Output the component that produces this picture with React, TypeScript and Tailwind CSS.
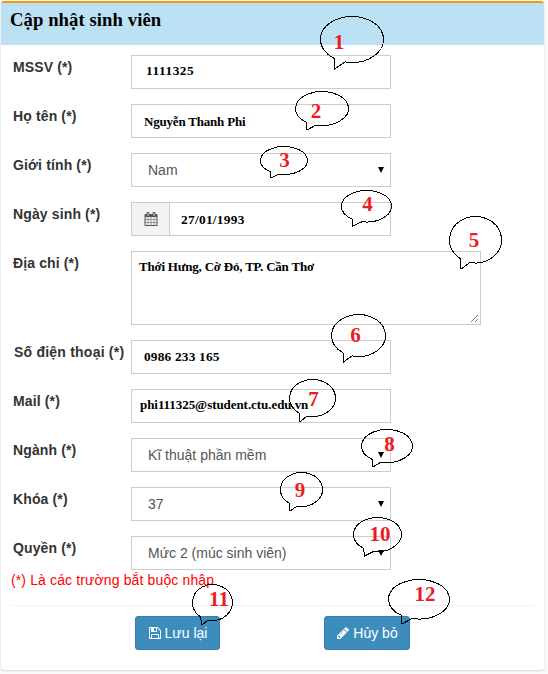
import type { ReactNode } from "react";

const sans = "font-['Liberation_Sans',Arial,sans-serif]";
const serif = "font-['Liberation_Serif','Times_New_Roman',serif]";

const calendarPath =
  "M192 1664h288v-288h-288v288zm352 0h320v-288h-320v288zm-352-352h288v-320h-288v320zm352 0h320v-320h-320v320zm-352-384h288v-288h-288v288zm736 736h320v-288h-320v288zm-384-736h320v-288h-320v288zm768 736h288v-288h-288v288zm-384-352h320v-320h-320v320zm-352-864v-288q0-13-9.5-22.5t-22.5-9.5h-64q-13 0-22.5 9.5t-9.5 22.5v288q0 13 9.5 22.5t22.5 9.5h64q13 0 22.5-9.5t9.5-22.5zm736 864h288v-320h-288v320zm-384-384h320v-288h-320v288zm384 0h288v-288h-288v288zm32-480v-288q0-13-9.5-22.5t-22.5-9.5h-64q-13 0-22.5 9.5t-9.5 22.5v288q0 13 9.5 22.5t22.5 9.5h64q13 0 22.5-9.5t9.5-22.5zm384-64v1280q0 52-38 90t-90 38h-1408q-52 0-90-38t-38-90v-1280q0-52 38-90t90-38h128v-96q0-66 47-113t113-47h64q66 0 113 47t47 113v96h384v-96q0-66 47-113t113-47h64q66 0 113 47t47 113v96h128q52 0 90 38t38 90z";
const savePath =
  "M512 1536h768v-384h-768v384zm896 0h128v-896q0-14-10-38.5t-20-34.5l-281-281q-10-10-34-20t-39-10v416q0 40-28 68t-68 28h-576q-40 0-68-28t-28-68v-416h-128v1280h128v-416q0-40 28-68t68-28h832q40 0 68 28t28 68v416zm-384-928v-320q0-13-9.5-22.5t-22.5-9.5h-192q-13 0-22.5 9.5t-9.5 22.5v320q0 13 9.5 22.5t22.5 9.5h192q13 0 22.5-9.5t9.5-22.5zm640 32v928q0 40-28 68t-68 28h-1344q-40 0-68-28t-28-68v-1344q0-40 28-68t68-28h928q40 0 88 20t76 48l280 280q28 28 48 76t20 88z";
const pencilPath =
  "M491 1536l91-91-235-235-91 91v107h128v128h107zm523-928q0-22-22-22-10 0-17 7l-542 542q-7 7-7 17 0 22 22 22 10 0 17-7l542-542q7-7 7-17zm-54-192l416 416-832 832h-416v-416zm683 96q0 53-37 90l-166 166-416-416 166-165q36-38 90-38 53 0 91 38l235 234q37 39 37 91z";

function Icon({ d, className = "size-3.5" }: { d: string; className?: string }) {
  return (
    <svg viewBox="0 0 1792 1792" className={`shrink-0 fill-current ${className}`}>
      <path d={d} />
    </svg>
  );
}

function Row({ label, tracking = "tracking-[0.13px]", children }: { label: string; tracking?: string; children: ReactNode }) {
  return (
    <div className="flex items-start">
      <div className={`w-[118px] shrink-0 whitespace-nowrap pt-[2px] text-sm font-bold leading-5 text-[#333] ${tracking}`}>{label}</div>
      {children}
    </div>
  );
}

function Field({ className, children }: { className: string; children: ReactNode }) {
  return (
    <div className={`h-[34px] w-[260px] whitespace-nowrap border border-[#ccc] bg-white font-bold text-black ${serif} ${className}`}>
      {children}
    </div>
  );
}

function Select({ children }: { children: ReactNode }) {
  return (
    <div className="flex h-[34px] w-[260px] items-center justify-between border border-[#ccc] bg-white pl-4 pr-1.5 text-sm text-[#555]">
      <span>{children}</span>
      <svg viewBox="0 0 6 6" className="h-1.5 w-1.5 fill-black">
        <path d="M0 0H6L3 6Z" />
      </svg>
    </div>
  );
}

function Button({ d, className, children }: { d: string; className: string; children: ReactNode }) {
  return (
    <button className={`flex h-[34px] items-center justify-center gap-[3px] rounded-[3px] border border-[#367fa9] bg-[#3c8dbc] text-sm text-white ${className}`}>
      <Icon d={d} />
      <span>{children}</span>
    </button>
  );
}

type Note = {
  n: number;
  box: [number, number, number, number];
  tail: [number, number, number, number];
  text: [number, number];
};

// box: left, top, right, bottom; tail: left root x, tip x, tip y, right root x; text: centre x, baseline
const notes: Note[] = [
  { n: 1, box: [320.5, 16.5, 383.5, 62.5], tail: [334, 334.5, 69, 345], text: [339, 49] },
  { n: 2, box: [295.5, 91.5, 348.5, 125.5], tail: [306.5, 307, 130, 316], text: [316, 118] },
  { n: 3, box: [260.5, 146.5, 307.5, 174.5], tail: [270.5, 271, 178, 279], text: [284.5, 167] },
  { n: 4, box: [341.5, 190.5, 391.5, 222], tail: [352, 352.5, 226, 362], text: [367.5, 211] },
  { n: 5, box: [449.5, 216.5, 501.5, 263], tail: [460.5, 461, 269, 470], text: [474, 247] },
  { n: 6, box: [331.5, 314.5, 385.5, 356.5], tail: [343, 343.5, 362, 352], text: [355.5, 342] },
  { n: 7, box: [289.5, 379.5, 335.5, 416.5], tail: [299, 300, 422, 307], text: [313.5, 406] },
  { n: 8, box: [361.5, 429.5, 412.5, 462.5], tail: [372.5, 373, 467, 381], text: [389.5, 451] },
  { n: 9, box: [280.5, 472.5, 322.5, 506.5], tail: [289.5, 290, 511, 297], text: [300, 497] },
  { n: 10, box: [353.5, 517.5, 401.5, 551.5], tail: [363.5, 364.5, 556, 374], text: [380, 541] },
  { n: 11, box: [192.5, 584.5, 232.5, 620.5], tail: [200.5, 202, 625, 208], text: [219, 606] },
  { n: 12, box: [388.5, 579.5, 449.5, 619], tail: [401.5, 402, 624, 412], text: [425, 601] },
];

function Callout({ n, box, tail, text }: Note) {
  const [left, top, right, bottom] = box;
  const rx = (right - left) / 2;
  const ry = (bottom - top) / 2;
  const cx = left + rx;
  const cy = top + ry;
  const edge = (x: number) => cy + ry * Math.sqrt(1 - ((x - cx) / rx) ** 2);
  const ox = Math.floor(left) - 2;
  const oy = Math.floor(top) - 2;
  const w = Math.ceil(right - left) + 6;
  const h = Math.ceil(bottom - top) + 14;
  return (
    <svg
      className="pointer-events-none absolute"
      style={{ left: ox, top: oy, width: w, height: h }}
      viewBox={`${ox} ${oy} ${w} ${h}`}
    >
      <path
        d={`M${tail[3]} ${edge(tail[3])}A${rx} ${ry} 0 1 0 ${tail[0]} ${edge(tail[0])}L${tail[1]} ${tail[2]}Z`}
        fill="none"
        stroke="#000"
        strokeWidth="1"
        shapeRendering="crispEdges"
      />
      <text x={text[0]} y={text[1]} textAnchor="middle" className={`fill-[#ed1c24] text-[21px] font-bold ${serif}`}>
        {n}
      </text>
    </svg>
  );
}

export default function App() {
  return (
    <div className={`relative h-[674px] w-[548px] overflow-hidden bg-[#f9f9f9] pl-px pt-px ${sans}`}>
      <div className="h-[669px] w-[543px] rounded-[3px] border-t-2 border-[#f39c12] bg-white shadow-[0_1px_2px_rgba(0,0,0,0.15)]">
        <div className="h-[42px] bg-[#bce1f4] pl-[9px] pt-[5px]">
          <h1 className={`text-[18.67px] font-bold leading-6 tracking-[0.08px] text-black ${serif}`}>Cập nhật sinh viên</h1>
        </div>
        <div className="flex flex-col gap-[15px] pl-3 pt-[10px]">
          <Row label="MSSV (*)">
            <Field className="pl-[14px] text-[13.33px] leading-[30px] tracking-[0.55px]">1111325</Field>
          </Row>
          <Row label="Họ tên (*)">
            <Field className="pl-3 text-[13px] leading-[34px] tracking-[-0.2px]">Nguyễn Thanh Phi</Field>
          </Row>
          <Row label="Giới tính (*)">
            <Select>Nam</Select>
          </Row>
          <Row label="Ngày sinh (*)">
            <div className="flex">
              <div className="flex h-[34px] w-[38px] items-center justify-center border border-r-0 border-[#ccc] bg-[#f3f3f3] text-[#555]">
                <Icon d={calendarPath} />
              </div>
              <div className={`h-[34px] w-[222px] border border-[#ccc] pl-[11px] text-[13.33px] font-bold leading-[34px] tracking-[0.3px] text-black ${serif}`}>
                27/01/1993
              </div>
            </div>
          </Row>
          <Row label="Địa chỉ (*)">
            <div className={`flex h-[74px] w-[350px] items-end justify-between border border-[#ccc] pl-[7px] text-[13px] font-bold tracking-[-0.22px] text-black ${serif}`}>
              <span className="self-start leading-[30px]">Thới Hưng, Cờ Đỏ, TP. Cần Thơ</span>
              <svg viewBox="0 0 9 9" className="mb-px mr-px h-[9px] w-[9px]">
                <path d="M1 8L8 1M5 8L8 5" stroke="#777" fill="none" />
              </svg>
            </div>
          </Row>
          <Row label="Số điện thoại (*)" tracking="pl-px tracking-[0.22px]">
            <Field className="pl-3 text-[13.33px] leading-[32px] tracking-[0.2px]">0986 233 165</Field>
          </Row>
          <Row label="Mail (*)">
            <Field className="pl-2 text-[13px] leading-[30px] tracking-[-0.06px]">phi111325@student.ctu.edu.vn</Field>
          </Row>
          <Row label="Ngành (*)">
            <Select>Kĩ thuật phần mềm</Select>
          </Row>
          <Row label="Khóa (*)">
            <Select>37</Select>
          </Row>
          <Row label="Quyền (*)">
            <Select>Mức 2 (múc sinh viên)</Select>
          </Row>
        </div>
        <p className="pl-2.5 text-sm leading-5 tracking-[0.13px] text-[#f00]">(*) Là các trường bắt buộc nhập</p>
        <div className="ml-2.5 mr-2.5 mt-[15px] border-t border-[#f2f2f2]" />
        <div className="flex pl-[134px] pt-[10px]">
          <Button d={savePath} className="w-[85px]">Lưu lại</Button>
          <Button d={pencilPath} className="ml-[104px] w-[86px]">Hủy bỏ</Button>
        </div>
      </div>
      {notes.map((note) => (
        <Callout key={note.n} {...note} />
      ))}
    </div>
  );
}
